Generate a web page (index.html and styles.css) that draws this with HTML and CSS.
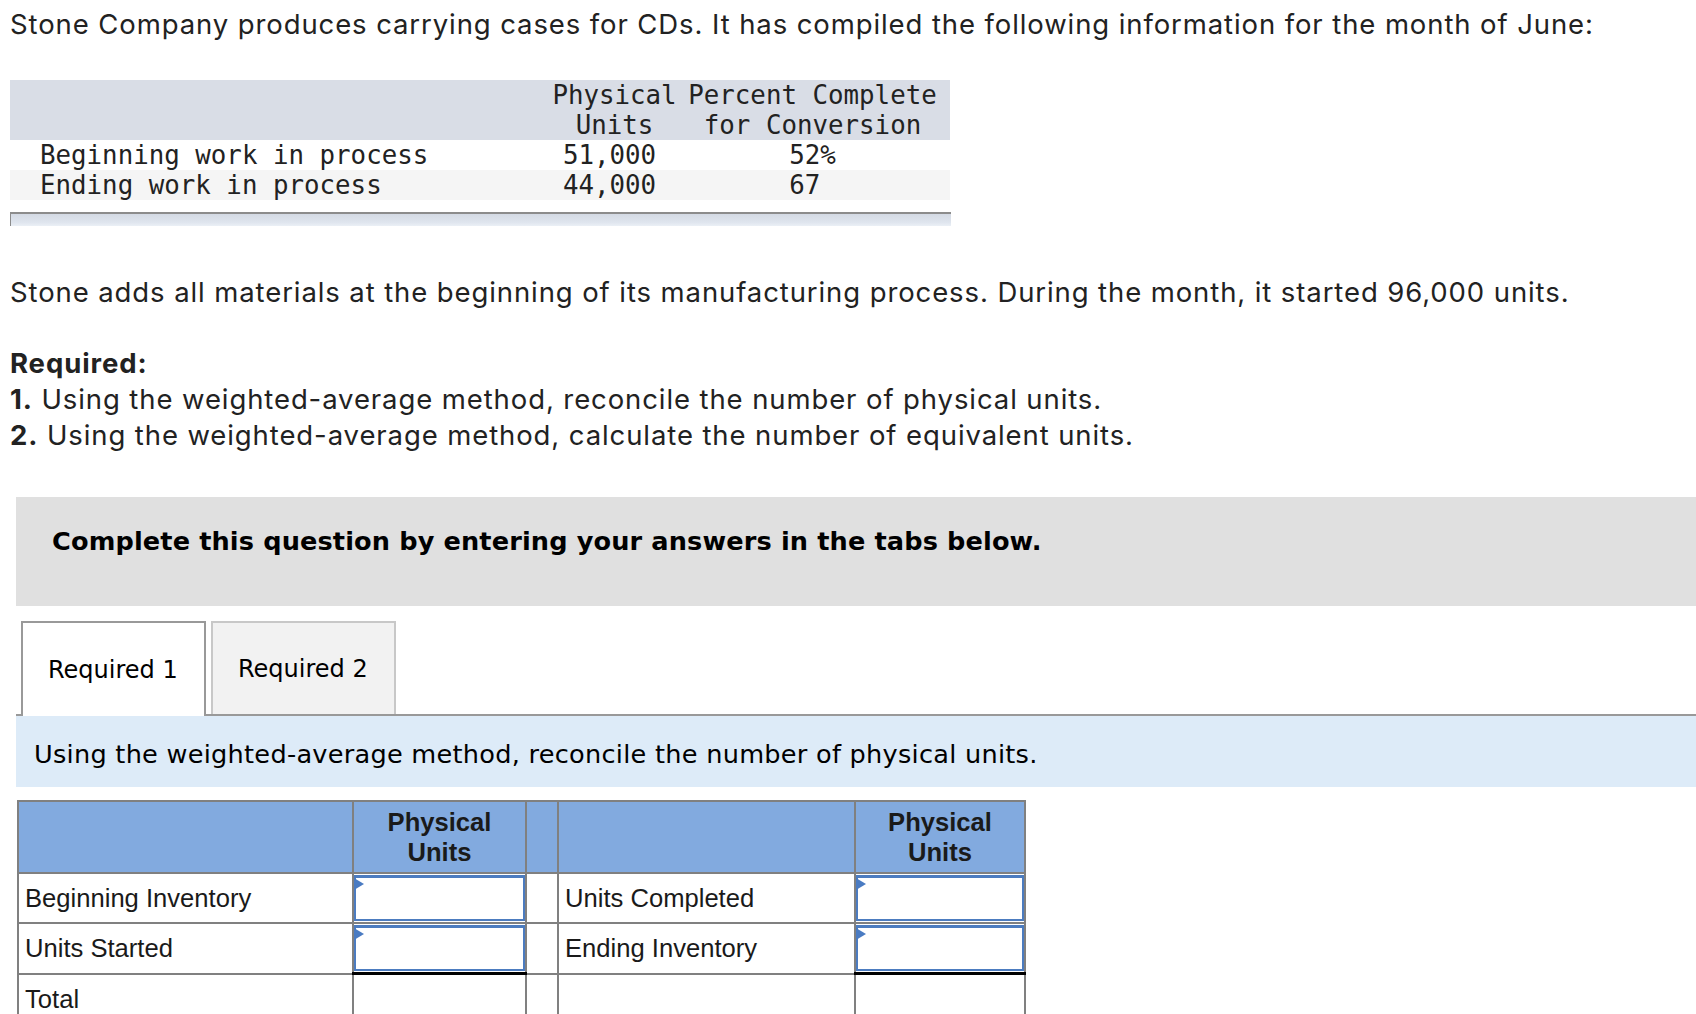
FILE: index.html
```html
<!DOCTYPE html>
<html lang="en">
<head>
<meta charset="utf-8">
<title>Stone Company – Physical Units</title>
<link rel="stylesheet" href="styles.css">
</head>
<body>
<div class="page">
  <p class="intro">Stone Company produces carrying cases for CDs. It has compiled the following information for the month of June:</p>

  <div class="data-wrap">
    <table class="data">
      <colgroup><col class="c-label"><col class="c-units"><col class="c-pct"></colgroup>
      <thead>
        <tr><th></th><th>Physical<br>Units</th><th>Percent Complete<br>for Conversion</th></tr>
      </thead>
      <tbody>
        <tr><td class="label">Beginning work in process</td><td class="num">51,000</td><td class="pct">52%</td></tr>
        <tr class="alt"><td class="label">Ending work in process</td><td class="num">44,000</td><td class="pct">67&nbsp;</td></tr>
      </tbody>
    </table>
    <div class="scrollbar"></div>
  </div>

  <p class="para">Stone adds all materials at the beginning of its manufacturing process. During the month, it started 96,000 units.</p>

  <div class="required">
    <p class="req-title">Required:</p>
    <p><b>1.</b> Using the weighted-average method, reconcile the number of physical units.</p>
    <p><b>2.</b> Using the weighted-average method, calculate the number of equivalent units.</p>
  </div>

  <div class="notice">Complete this question by entering your answers in the tabs below.</div>

  <div class="tabs">
    <div class="tab active">Required 1</div>
    <div class="tab">Required 2</div>
  </div>

  <div class="instruction">Using the weighted-average method, reconcile the number of physical units.</div>

  <table class="units">
    <colgroup><col class="u1"><col class="u2"><col class="u3"><col class="u4"><col class="u5"></colgroup>
    <thead>
      <tr><th></th><th>Physical<br>Units</th><th></th><th></th><th>Physical<br>Units</th></tr>
    </thead>
    <tbody>
      <tr>
        <td class="txt">Beginning Inventory</td>
        <td class="in"><div class="input"><svg class="flag" width="10" height="12" viewBox="0 0 10 12"><path d="M0 0L10 6L0 12Z"/></svg></div></td>
        <td></td>
        <td class="txt">Units Completed</td>
        <td class="in"><div class="input"><svg class="flag" width="10" height="12" viewBox="0 0 10 12"><path d="M0 0L10 6L0 12Z"/></svg></div></td>
      </tr>
      <tr>
        <td class="txt">Units Started</td>
        <td class="in sum"><div class="input"><svg class="flag" width="10" height="12" viewBox="0 0 10 12"><path d="M0 0L10 6L0 12Z"/></svg></div></td>
        <td></td>
        <td class="txt">Ending Inventory</td>
        <td class="in sum"><div class="input"><svg class="flag" width="10" height="12" viewBox="0 0 10 12"><path d="M0 0L10 6L0 12Z"/></svg></div></td>
      </tr>
      <tr><td class="txt">Total</td><td></td><td></td><td></td><td></td></tr>
    </tbody>
  </table>
</div>
</body>
</html>
```

FILE: styles.css
```css
html, body {
  margin: 0;
  padding: 0;
  background: #fff;
}

.page {
  padding: 6px 0 0 10px;
  color: #222;
  font-family: "Inter", "Open Sans", sans-serif;
  font-size: 27.5px;
  line-height: 36px;
  letter-spacing: 0.9px;
}

p { margin: 0; }

.intro { margin-bottom: 38px; }

/* ---------- data table (monospace) ---------- */
.data-wrap { width: 941px; }

.data {
  width: 940px;
  border-collapse: collapse;
  table-layout: fixed;
  font-family: "DejaVu Sans Mono", "Liberation Mono", monospace;
  font-size: 25.8px;
  line-height: 30px;
  letter-spacing: 0;
  color: #222;
}
.c-label { width: 532px; }
.c-units { width: 145px; }
.c-pct { width: 263px; }

.data th, .data td { padding: 0; font-weight: normal; white-space: nowrap; }
.data thead tr { background: #d9dde6; }
.data th { text-align: center; }
.data th:last-child { padding-right: 12px; }
.data td.label { padding-left: 30px; text-align: left; }
.data td.num { text-align: center; padding-right: 10px; }
.data td.pct { text-align: center; padding-right: 12px; }
.data tr.alt { background: #f5f5f5; }

.scrollbar {
  margin-top: 12px;
  height: 12px;
  border-top: 2px solid #8c8c8c;
  border-left: 1px solid #8c8c8c;
  background: linear-gradient(#d4dae4, #dfe5ee 70%, #ebf0f6);
}

/* ---------- prose ---------- */
.para { margin-top: 48px; }
.required { margin-top: 35px; }
.req-title, .required b { font-weight: 700; }

/* ---------- answer area ---------- */
.notice {
  margin: 44px 0 0 6px;
  height: 109px;
  box-sizing: border-box;
  padding: 28px 0 0 36px;
  background: #e0e0e0;
  font-family: "DejaVu Sans", Verdana, sans-serif;
  font-weight: 700;
  font-size: 25.6px;
  line-height: 32px;
  letter-spacing: 0.13px;
  color: #000;
}

.tabs {
  display: flex;
  gap: 5px;
  margin: 15px 0 0 6px;
  padding-left: 5px;
  border-bottom: 2px solid #999;
  height: 93px;
  font-family: "DejaVu Sans", Verdana, sans-serif;
  font-size: 24px;
  letter-spacing: 0;
  color: #000;
}
.tab {
  width: 185px;
  height: 93px;
  box-sizing: border-box;
  display: flex;
  align-items: center;
  padding-left: 25px;
  border: 2px solid #c8c8c8;
  border-bottom: 0;
  background: #f2f2f2;
}
.tab.active {
  height: 95px;
  margin-bottom: -2px;
  border-color: #999;
  background: #fff;
  position: relative;
}

.instruction {
  margin-left: 6px;
  height: 71px;
  box-sizing: border-box;
  padding: 22px 0 0 18px;
  background: #ddebf8;
  font-family: "DejaVu Sans", Verdana, sans-serif;
  font-size: 25.6px;
  line-height: 32px;
  letter-spacing: 0.26px;
  color: #000;
}

/* ---------- units table ---------- */
.units {
  margin: 13px 0 0 7px;
  width: 1007px;
  border-collapse: collapse;
  table-layout: fixed;
  font-family: "Liberation Sans", Arial, sans-serif;
  font-size: 25.6px;
  line-height: 30px;
  letter-spacing: 0;
  color: #1a1a1a;
}
.u1 { width: 335px; }
.u2 { width: 173px; }
.u3 { width: 32px; }
.u4 { width: 297px; }
.u5 { width: 170px; }

.units th, .units td {
  border: 2px solid #808080;
  padding: 0;
}
.units th {
  background: #82aadf;
  height: 70px;
  font-weight: 700;
  text-align: center;
  vertical-align: middle;
}
.units td { height: 48px; vertical-align: middle; }
.units td.txt { padding-left: 6px; white-space: nowrap; }
.units td.in { padding: 0; }
.units td.sum { border-bottom: 3px solid #000; }

.input {
  position: relative;
  height: 46px;
  box-sizing: border-box;
  border: 2px solid #4c7cc0;
  border-top-width: 3px;
  background: #fff;
}
.flag {
  position: absolute;
  left: -2px;
  top: 0;
  display: block;
  fill: #4a7bc2;
}
```
